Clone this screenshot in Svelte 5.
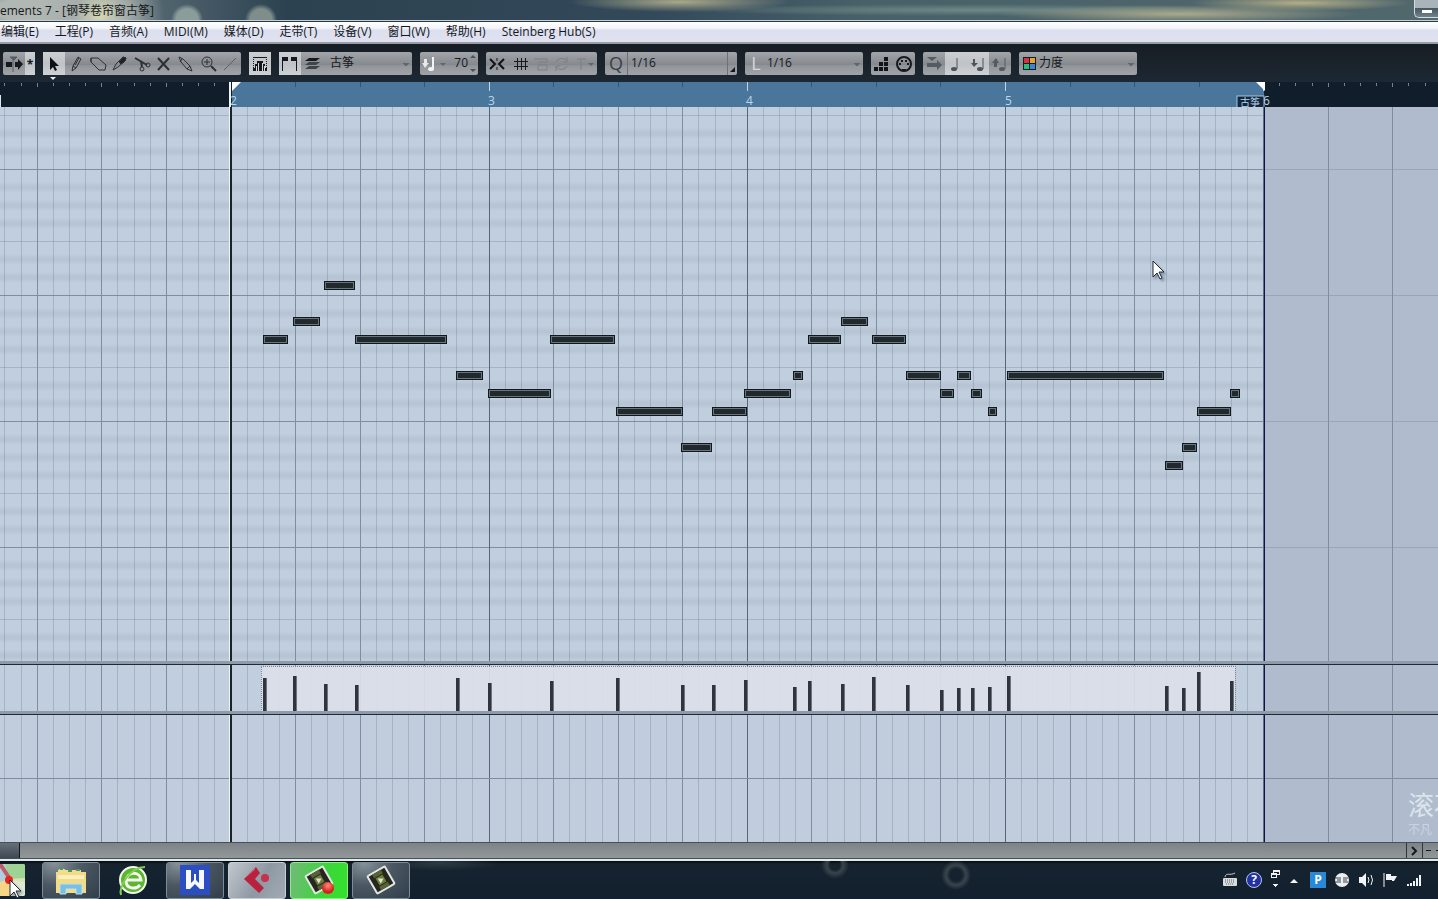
<script>
	const menus = ['编辑(E)', '工程(P)', '音频(A)', 'MIDI(M)', '媒体(D)', '走带(T)', '设备(V)', '窗口(W)', '帮助(H)', 'Steinberg Hub(S)'];

	// timeline: one beat in pixels, and where bar 2 starts
	const BEAT = 64.55;
	const ORIGIN = 230.4;
	const END = 1264;

	const lines = [];
	for (let i = -16; i <= 96; i++) {
		const x = Math.round(ORIGIN + (i * BEAT) / 4);
		const kind = i % 16 === 0 ? 'bar' : i % 4 === 0 ? 'beat' : 'fine';
		lines.push({ x, kind });
	}
	const shown = lines.filter(l => l.kind !== 'fine' || l.x < END);

	const octaves = [-64, 62, 188, 314, 440, 566];

	// start, end, row
	const notes = [
		[263, 288, 228], [293, 320, 210], [324, 355, 174], [355, 447, 228], [456, 483, 264],
		[488, 551, 282], [550, 615, 228], [616, 683, 300], [681, 712, 336], [712, 747, 300],
		[744, 791, 282], [793, 803, 264], [808, 841, 228], [841, 868, 210], [872, 906, 228],
		[906, 941, 264], [940, 954, 282], [957, 971, 264], [971, 982, 282], [988, 997, 300],
		[1007, 1164, 264], [1165, 1183, 354], [1182, 1197, 336], [1197, 1231, 300], [1230, 1240, 282]
	];

	// start, height
	const velocities = [
		[263, 33], [293, 35], [324, 27], [355, 26], [456, 33], [488, 28], [550, 30], [616, 33],
		[681, 26], [712, 26], [744, 31], [793, 24], [808, 30], [841, 27], [872, 34], [906, 26],
		[940, 21], [957, 23], [971, 23], [988, 24], [1007, 35], [1165, 25], [1182, 23], [1197, 39], [1230, 30]
	];

	let tool = $state('select');
	let velocity = $state('70');
	const tools = ['select', 'draw', 'erase', 'trim', 'split', 'mute', 'glue', 'zoom', 'line'];
</script>

{#snippet grid()}
	{#each shown as l}
		<rect class={l.kind} x={l.x} y="0" width="1" height="100%" />
	{/each}
{/snippet}

{#snippet locators()}
	<rect x={END - 1} y="0" width="1" height="100%" fill="#5c6f86" />
	<rect x={END} y="0" width="1" height="100%" fill="#0a1648" />
	<rect x="229" y="0" width="3" height="100%" fill="#eef4f4" />
	<rect x="230" y="0" width="2" height="100%" fill="#16242b" />
{/snippet}

{#snippet pointer()}
	<svg width="14" height="21" viewBox="0 0 14 21"><path d="M1 1v16l4-4 3 6 2-1-3-6h5z" fill="#fff" stroke="#1c2836" /></svg>
{/snippet}

{#snippet camera()}
	<svg width="34" height="32" viewBox="0 0 34 32">
		<g transform="rotate(-30 17 16)">
			<rect x="7" y="6" width="20" height="20" rx="1" fill="#25271f" stroke="#e4e6e2" stroke-width="2" />
			<path d="M12 7h10v4H12zM12 21h10v4H12z" fill="#566238" />
			<rect x="13" y="12" width="8" height="8" fill="#6c7c3c" />
			<path d="M15 13l5 3-5 3z" fill="#dfe3cf" />
		</g>
	</svg>
{/snippet}

<div class="window">
	<header class="title">
		<h1>ements 7 - [钢琴卷帘窗古筝]</h1>
		<button class="minimize" aria-label="最小化"><i></i></button>
	</header>

	<nav class="menu">
		{#each menus as item}
			<button>{item}</button>
		{/each}
	</nav>

	<div class="toolbar">
		<div class="group">
			<button aria-label="自动滚动"><svg width="22" height="23" viewBox="0 0 22 23"><path d="M3 10h6v5H3zM12 10h3V7l5 5-5 6v-3h-3z" fill="#15191d" /><path d="M10 6v14M7 5h7l-3 3z" stroke="#555c63" fill="#555c63" /></svg></button>
			<button class="star on" aria-label="暂停滚动">*</button>
		</div>

		<div class="group">
			{#each tools as t}
				<button class:on={tool === t} aria-label={t} onclick={() => (tool = t)}>
					<svg width="22" height="23" viewBox="0 0 22 23" fill="none" stroke="#2b3035">
						{#if t === 'select'}
							<path d="M7 5v13l3-3 2 4 2-1-2-4h4z" fill="#0c1014" stroke="none" />
						{:else if t === 'draw'}
							<path d="M8 14l5-9 3 2-5 9-4 3zM8 14l3 2M10 13l4-7" />
						{:else if t === 'erase'}
							<path d="M4 6h7l8 7-1 5h-6L4 10zM4 6v4" />
						{:else if t === 'trim'}
							<path d="M4 18l3-6 7-7 3 1-1 3-7 6z" /><path d="M10 10l4-5 3 1-1 3-4 3z" fill="#1c2024" />
						{:else if t === 'split'}
							<path d="M4 6l12 7M10 9l1 6" stroke-width="2" /><circle cx="11" cy="17" r="2" /><circle cx="17" cy="13" r="2" />
						{:else if t === 'mute'}
							<path d="M5 6l11 12M16 6L5 18" stroke-width="2" />
						{:else if t === 'glue'}
							<path d="M4 5l4 2 7 7 2 5-5-2-6-7zM7 7l-2 3M12 17l3-3" />
						{:else if t === 'zoom'}
							<circle cx="10" cy="10" r="5" /><path d="M7 10h6M10 7v6" /><path d="M14 14l5 5" stroke-width="2" />
						{:else}
							<path d="M5 18L17 6" stroke="#5b6168" />
						{/if}
					</svg>
				</button>
			{/each}
			<span class="marker"></span>
		</div>

		<div class="group">
			<button class="on" aria-label="独奏编辑器"><svg width="22" height="23" viewBox="0 0 22 23" shape-rendering="crispEdges"><path d="M4 5h14v1H4z" fill="#15191d" /><path d="M4 7v9M17 7v9" stroke="#15191d" stroke-dasharray="1 1" /><path d="M4 19v-3h2v-4h2V9h6v3h2v4h2v3z" fill="#15191d" /><path d="M7 14v5M9 11v8M13 11v8M15 14v5" stroke="#d5d7d9" /></svg></button>
		</div>

		<div class="group part">
			<button class="on" aria-label="显示部分边界"><svg width="22" height="23" viewBox="0 0 22 23" shape-rendering="crispEdges"><path d="M3 5h6v4H4v10H3zM12 5h6v14h-1V9h-5z" fill="#15191d" /></svg></button>
			<svg width="22" height="23" viewBox="0 0 22 23"><path d="M8 6h11l-4 3H4z" fill="#15191d" /><path d="M8 10h11l-4 3H4zM8 14h11l-4 3H4z" fill="#3e444a" /></svg>
			<select aria-label="部分"><option>古筝</option></select>
		</div>

		<div class="group vel">
			<svg width="30" height="23" viewBox="0 0 30 23"><path d="M4 7v4H2l3 5 4-5H7V7z" fill="#e6e8ea" /><ellipse cx="11" cy="17" rx="3" ry="2" fill="#f2f3f4" /><path d="M13 17V5" stroke="#f2f3f4" stroke-width="2" /><path d="M20 11h6l-3 3z" fill="#5f666d" /></svg>
			<input aria-label="插入力度" bind:value={velocity} />
			<svg width="10" height="23" viewBox="0 0 10 23"><path d="M2 6l3-3 3 3zM2 17l3 3 3-3z" fill="#4c5259" /></svg>
		</div>

		<div class="group">
			<button aria-label="吸附"><svg width="22" height="23" viewBox="0 0 22 23"><path d="M4 7l5 5-5 5M18 7l-5 5 5 5" fill="none" stroke="#101418" stroke-width="2" /><path d="M11 6v3M11 15v3" stroke="#101418" /></svg></button>
			<button aria-label="网格"><svg width="24" height="23" viewBox="0 0 24 23" shape-rendering="crispEdges"><path d="M9 6v12M13 6v12M17 6v12M6 9h14M6 14h14" stroke="#15191d" fill="none" /></svg></button>
			<button aria-label="网格类型" disabled><svg width="20" height="23" viewBox="0 0 20 23"><path d="M2 7h13v3H6M6 13h9v5H6z" fill="none" stroke="#7b8086" /></svg></button>
			<button aria-label="量化循环" disabled><svg width="20" height="23" viewBox="0 0 20 23"><path d="M4 10a6 5 0 0 1 11-1M15 14a6 5 0 0 1-11 1M15 5v5h-4M4 19v-5h4" fill="none" stroke="#7b8086" /></svg></button>
			<button aria-label="类型" disabled><svg width="25" height="23" viewBox="0 0 25 23"><path d="M5 7h9M9 7v11" stroke="#7b8086" /><path d="M16 11h6l-3 3z" fill="#5f666d" /></svg></button>
		</div>

		<div class="group quant">
			<span class="letter dark">Q</span>
			<select class="plain" aria-label="量化预置"><option>1/16</option></select>
			<button aria-label="量化面板"><svg width="9" height="23" viewBox="0 0 9 23"><path d="M7 15v5H2z" fill="#15191d" /></svg></button>
		</div>

		<div class="group length">
			<span class="letter">L</span>
			<select aria-label="长度量化"><option>1/16</option></select>
		</div>

		<div class="group">
			<button aria-label="步进输入"><svg width="22" height="23" viewBox="0 0 22 23"><path d="M3 15h4v4H3zM8 15h4v4H8zM13 15h4v4h-4zM8 10h4v4H8zM13 10h4v4h-4zM13 5h4v4h-4z" fill="#101418" /></svg></button>
			<button aria-label="MIDI输入"><svg width="22" height="23" viewBox="0 0 22 23"><circle cx="11" cy="12" r="7" fill="none" stroke="#15191d" stroke-width="2" /><path d="M6 11h2v2H6zM8 8h2v2H8zM12 8h2v2h-2zM14 11h2v2h-2zM9 17h4v2H9z" fill="#15191d" /></svg></button>
		</div>

		<div class="group">
			<button aria-label="移动插入模式"><svg width="22" height="23" viewBox="0 0 22 23"><path d="M4 5h10l-5 4zM4 11h10V8l5 5-5 5v-3H4z" fill="#555b62" /></svg></button>
			<button class="on" aria-label="记录音高"><svg width="22" height="23" viewBox="0 0 22 23"><ellipse cx="9" cy="17" rx="3" ry="2" fill="#4d545b" /><path d="M12 17V6" stroke="#4d545b" /></svg></button>
			<button class="on" aria-label="记录打开力度"><svg width="22" height="23" viewBox="0 0 22 23"><path d="M6 7v4H4l3 4 4-4H8V7z" fill="#4d545b" /><ellipse cx="13" cy="17" rx="3" ry="2" fill="#4d545b" /><path d="M16 17V6" stroke="#4d545b" /></svg></button>
			<button aria-label="记录关闭力度"><svg width="22" height="23" viewBox="0 0 22 23"><path d="M5 15v-4H3l4-5 3 5H8v4z" fill="#555b62" /><ellipse cx="13" cy="17" rx="3" ry="2" fill="#555b62" /><path d="M16 17V6" stroke="#555b62" /></svg></button>
		</div>

		<div class="group color">
			<svg width="20" height="23" viewBox="0 0 20 23"><path d="M4 5h13v13H4z" fill="#181c20" /><path d="M5 6h5v5H5z" fill="#d8323c" /><path d="M11 6h5v5h-5z" fill="#e0a634" /><path d="M5 12h5v5H5z" fill="#22c07c" /><path d="M11 12h5v5h-5z" fill="#3f83d6" /></svg>
			<select aria-label="颜色"><option>力度</option></select>
		</div>
	</div>

	<svg class="ruler" height="25" aria-label="标尺">
		<rect width="100%" height="25" fill="#101e2c" />
		<rect x="232" width={END - 232} height="25" fill="#4a769b" />
		{#each lines as l}
			{#if l.x < 229 || l.x > END}
				<rect x={l.x} y="1" width="1" height={l.kind === 'fine' ? 3 : 4} fill="#708494" />
			{:else if l.kind === 'bar' && l.x > 240}
				<rect x={l.x} y="0" width="1" height="9" fill="#c3d4e2" />
			{:else if l.kind === 'beat'}
				<rect x={l.x} y="0" width="1" height="5" fill="#2f5676" />
			{/if}
		{/each}
		<rect x="0" y="13" width="1" height="12" fill="#dce6ec" />
		{#each [2, 3, 4, 5, 6] as n}
			<text x={230 + Math.round((n - 2) * 258.2)} y="23">{n}</text>
		{/each}
		<path d="M232 0h9l-9 9zM1265 0h-9l9 9z" fill="#fff" />
		<rect x="1237" y="14" width="27" height="14" fill="#12283e" stroke="#a9c4da" />
		<text class="tag" x="1240" y="24">古筝</text>
		<rect x="229" width="2" height="25" fill="#eef4f4" />
	</svg>

	<main class="roll">
		<svg width="100%" height="100%" shape-rendering="crispEdges">
			<defs>
				<linearGradient id="band" x2="0" y2="1">
					<stop offset="0" stop-color="#aebccc" stop-opacity="0" />
					<stop offset="0.4" stop-color="#aebccc" stop-opacity="0.55" />
					<stop offset="0.6" stop-color="#aebccc" stop-opacity="0.55" />
					<stop offset="1" stop-color="#aebccc" stop-opacity="0" />
				</linearGradient>
			</defs>
			<rect width="100%" height="100%" fill="#c1cede" />
			{#each octaves as y}
				{#each [18, 36, 54, 90, 108] as d}
					<rect x="0" y={y + d - 5} width={END} height="11" fill="url(#band)" />
				{/each}
				<rect class="fine" x="0" y={y + 72} width={END} height="1" />
			{/each}
			<rect x={END} width="100%" height="100%" fill="#b0bccd" />
			{#each octaves as y}
				<rect class="beat" x="0" y={y} width={END} height="1" />
				<rect class="fine" x={END} y={y} width="100%" height="1" />
			{/each}
			{@render grid()}
			{#each notes as [from, to, y]}
				<rect x={from} y={y} width={to - from} height="9" fill="#10181e" />
				<rect x={from + 1} y={y + 1} width={to - from - 2} height="7" fill="#66757e" />
				<rect x={from + 2} y={y + 2} width={to - from - 4} height="5" fill="#22292c" />
			{/each}
			{@render locators()}
		</svg>
		<span class="pointer">{@render pointer()}</span>
	</main>

	<div class="splitter"></div>

	<svg class="lane" height="46" shape-rendering="crispEdges">
		<rect width="100%" height="100%" fill="#c1cede" />
		<rect x={END} width="100%" height="100%" fill="#b0bccd" />
		{@render grid()}
		<rect x="261" y="1" width="974" height="45" fill="#dbdfe8" fill-opacity="0.93" stroke="#7c8794" stroke-dasharray="1 1" />
		{#each velocities as [x, h]}
			<rect x={x} y={46 - h} width="4" height={h} fill="#30353d" />
			<rect x={x + 3} y={46 - h} width="1" height={h} fill="#6d747e" />
		{/each}
		{@render locators()}
	</svg>

	<div class="splitter"></div>

	<div class="lower">
		<svg width="100%" height="127" shape-rendering="crispEdges">
			<rect width="100%" height="100%" fill="#c1cddc" />
			<rect x={END} width="100%" height="100%" fill="#b0bccd" />
			{@render grid()}
			<rect class="beat" y="63" width="100%" height="1" />
			{@render locators()}
		</svg>
		<div class="watermark"><strong>滚石</strong><span>不凡</span></div>
	</div>

	<div class="scroll">
		<span class="thumb"></span>
		<button aria-label="向右滚动"><svg width="15" height="14" viewBox="0 0 15 14"><path d="M5 3l4 4-4 4" fill="none" stroke="#15191d" stroke-width="2" /></svg></button>
		<button aria-label="缩小"><svg width="15" height="14" viewBox="0 0 15 14"><path d="M3 6h5v1H3zM13 6h2v1h-2z" fill="#15191d" /></svg></button>
	</div>

	<footer class="taskbar">
		<button class="app bare first" aria-label="画图">
			<svg width="30" height="32" viewBox="0 0 30 32"><rect width="30" height="32" rx="2" fill="#d9e4ad" /><path d="M0 0h10l4 15L0 20z" fill="#aecfe2" /><path d="M10 0h18a2 2 0 0 1 2 2v12L14 15z" fill="#9fd395" /><path d="M14 16l16 2v12a2 2 0 0 1-2 2H15z" fill="#dfe9d2" /><path d="M0 19l14-3 2 16H0z" fill="#f5d684" /><path d="M5 0l10 15" stroke="#bd5d69" stroke-width="4" /><circle cx="14" cy="16" r="4" fill="#e82320" /></svg>
		</button>
		<button class="app" aria-label="资源管理器">
			<svg width="34" height="32" viewBox="0 0 34 32"><path d="M4 6l4-2 4 2h15v4H4z" fill="#f1dd92" /><path d="M2 8h12l2-2h6l1 2h9v21H2z" fill="#f3dc85" /><path d="M4 11h26v4H4z" fill="#fbefbd" /><path d="M6 5h3M14 7h4M22 6h4" stroke="#4b9a64" stroke-width="2" /><path d="M6 30V20h22v10h-6v-5H12v5z" fill="#79bfe2" stroke="#b9e2f3" /></svg>
		</button>
		<button class="app bare" aria-label="360浏览器">
			<svg width="34" height="34" viewBox="0 0 34 34"><circle cx="17" cy="17" r="13" fill="#5cb631" stroke="#f3f9ef" stroke-width="2" /><path d="M10 17h15c-1-9-14-9-15 1 0 8 10 9 14 4" fill="none" stroke="#f3f9ef" stroke-width="3" /><path d="M5 32C2 24 14 4 29 4" fill="none" stroke="#7fd04f" stroke-width="2" /></svg>
		</button>
		<button class="app" aria-label="WPS">
			<svg width="30" height="30" viewBox="0 0 30 30"><rect width="30" height="30" fill="#2b4ec2" /><path d="M6 5h5v13l3-3h2l3 3V5h5v19h-4l-5-5-5 5H6z" fill="#f6f8fc" /><path d="M14 9h2v7h-2z" fill="#f6f8fc" /></svg>
		</button>
		<button class="app active" aria-label="Cubase">
			<svg width="32" height="32" viewBox="0 0 32 32"><path d="M15 3L3 15l15 14 5-5-9-9 5-6z" fill="#b8223f" /><circle cx="24" cy="14" r="4" fill="#c8304b" /><path d="M5 13l9-8" stroke="#d9657a" /></svg>
		</button>
		<button class="app recording" aria-label="录像机">
			{@render camera()}
			<i class="rec"></i>
		</button>
		<button class="app" aria-label="Camtasia">{@render camera()}</button>

		<div class="tray">
			<svg width="16" height="20" viewBox="0 0 16 20"><path d="M3 7c1-5 5-1 10-4" fill="none" stroke="#c9ced2" /><rect x="1" y="8" width="14" height="8" rx="1" fill="#dadcdd" /><path d="M3 10h10M3 12h10M4 14h8" stroke="#5d656c" stroke-dasharray="1 1" /></svg>
			<span class="help">?</span>
			<svg width="10" height="24" viewBox="0 0 10 24" shape-rendering="crispEdges"><path d="M3 2h7v5H3z" fill="#eef2f5" /><path d="M4 4h5v2H4z" fill="#14202e" /><path d="M1 5h6v5H1z" fill="#eef2f5" /><path d="M2 7h4v2H2z" fill="#14202e" /><path d="M2 16h6l-3 3z" fill="#eef2f5" /></svg>
			<svg width="14" height="20" viewBox="0 0 14 20"><path d="M2 13h8L6 9z" fill="#f2f5f7" /></svg>
			<span class="pp">P</span>
			<svg width="16" height="16" viewBox="0 0 16 16"><circle cx="8" cy="8" r="7" fill="#eceff1" /><path d="M1 6h6M1 10h6M3 8h4M9 6h5M9 8h4M9 10h5" stroke="#38434d" fill="none" /></svg>
			<svg width="16" height="16" viewBox="0 0 16 16"><path d="M1 5h3l4-4v14l-4-4H1z" fill="#f2f5f7" /><path d="M10 5q2 3 0 6M13 3q3 5 0 10" fill="none" stroke="#f2f5f7" /></svg>
			<svg width="16" height="16" viewBox="0 0 16 16"><path d="M2 1v14" stroke="#f2f5f7" /><path d="M4 2h5v2h6l-3 5h-2V8H4z" fill="#f2f5f7" /></svg>
			<svg width="16" height="16" viewBox="0 0 16 16"><path d="M1 12h2v2H1zM4 11h2v3H4zM7 9h2v5H7zM10 6h2v8h-2zM13 3h2v11h-2z" fill="#f2f5f7" /></svg>
		</div>
		<span class="pointer low">{@render pointer()}</span>
	</footer>
</div>

<style>
	:global(body) {
		margin: 0;
		background: #101e2c;
	}

	.window {
		display: flex;
		flex-direction: column;
		min-height: 100vh;
		overflow: hidden;
		font: 12px/20px 'Open Sans', 'Noto Sans CJK SC', sans-serif;
		color: #15191d;
	}

	svg {
		display: block;
		flex-shrink: 0;
	}

	button, select, input {
		margin: 0;
		padding: 0;
		border: 0;
		background: none;
		font: inherit;
		color: inherit;
	}

	.title {
		display: flex;
		justify-content: space-between;
		height: 20px;
		border-bottom: 1px solid #c4d0d6;
		background:
			radial-gradient(circle at 100px 16px, #d5d7b4 0, #a6adaa 26px, transparent 64px),
			radial-gradient(ellipse 90px 22px at 50px 10px, #b1b8b4 60%, transparent),
			radial-gradient(circle at 187px 20px, #8b9d9b 11px, transparent 16px),
			radial-gradient(circle at 261px 20px, #7f8d8b 11px, transparent 16px),
			radial-gradient(ellipse 110px 10px at 680px 2px, #aaa98a, transparent),
			radial-gradient(ellipse 180px 9px at 1180px 14px, #a9aa8d, transparent),
			radial-gradient(ellipse 110px 8px at 1300px 3px, #b3ae88, transparent),
			radial-gradient(ellipse 300px 6px at 980px 10px, #6f8987, transparent),
			linear-gradient(90deg, #7f9196, #2c4250 20%, #33495a 45%, #486068 60%, #51686d);
	}

	h1 {
		margin: 0;
		font-size: 12px;
		line-height: 22px;
		font-weight: 400;
		white-space: nowrap;
	}

	.minimize {
		width: 24px;
		height: 18px;
		box-sizing: border-box;
		border: 1px solid #d3dce0;
		border-top: 0;
		border-right: 0;
		border-radius: 0 0 0 5px;
		background: linear-gradient(#a8b4b9 45%, #4a5961 50%, #71828a);
	}

	.minimize i {
		display: block;
		width: 10px;
		height: 3px;
		margin: 5px auto 0;
		background: #fff;
	}

	.menu {
		display: flex;
		gap: 16px;
		height: 20px;
		padding-left: 1px;
		border-top: 1px solid #2a3844;
		border-bottom: 2px solid #9a9da8;
		background: linear-gradient(#fff, #f3f5fb 30%, #dcdfee 42%, #e0e2f0);
		white-space: nowrap;
	}

	.toolbar {
		display: flex;
		align-items: center;
		gap: 8px;
		height: 38px;
		padding-left: 3px;
		background: linear-gradient(#171d24, #1d2833);
	}

	.group {
		position: relative;
		display: flex;
		align-items: center;
		flex-shrink: 0;
		height: 23px;
		border-radius: 2px;
		background: linear-gradient(#a2a5aa, #85888d 55%, #92959a 60%, #a0a3a8);
	}

	.on {
		background: linear-gradient(#cdd0d3, #bfc2c6 50%, #cfd2d5);
	}

	.star {
		width: 10px;
		height: 23px;
		line-height: 26px;
		font-weight: 700;
	}

	.marker {
		position: absolute;
		left: 7px;
		top: 25px;
		border: 3px solid transparent;
		border-top-color: #e9edf0;
	}

	/* the drop-down arrow is three stacked strips */
	select {
		flex: 1;
		min-width: 0;
		height: 23px;
		appearance: none;
		background:
			linear-gradient(#5f666d, #5f666d) no-repeat right 3px top 11px / 6px 1px,
			linear-gradient(#5f666d, #5f666d) no-repeat right 4px top 12px / 4px 1px,
			linear-gradient(#5f666d, #5f666d) no-repeat right 5px top 13px / 2px 1px;
	}

	select.plain {
		padding-left: 3px;
		border: 1px solid #6c7177;
		border-width: 0 1px;
		background: none;
	}

	.part {
		width: 133px;
	}

	.part select {
		padding-left: 7px;
	}

	.vel {
		width: 58px;
	}

	.vel input {
		width: 18px;
		text-align: right;
	}

	.quant {
		width: 132px;
	}

	.length, .color {
		width: 118px;
	}

	.letter {
		width: 22px;
		font-size: 18px;
		line-height: 23px;
		text-align: center;
		color: #d5d8da;
	}

	.letter.dark {
		color: #3a4047;
	}

	.ruler, .lane {
		width: 100%;
	}

	.ruler {
		overflow: visible;
	}

	text {
		font-size: 12px;
		fill: #b9d6ec;
	}

	text.tag {
		font-size: 10px;
	}

	.fine {
		fill: #5a7088;
		fill-opacity: 0.28;
	}

	.beat {
		fill: #7e8ea2;
	}

	.bar {
		fill: #56677b;
	}

	.roll {
		position: relative;
		display: flex;
		flex: 1;
		min-height: 300px;
	}

	.roll > svg {
		position: absolute;
	}

	.pointer {
		position: absolute;
		left: 1152px;
		top: 153px;
		filter: drop-shadow(2px 2px 1px rgba(40, 60, 80, 0.4));
	}

	.pointer.low {
		left: 9px;
		top: 18px;
	}

	.splitter {
		height: 3px;
		border-bottom: 1px solid #1c2a3c;
		background: #909ba9;
	}

	.lower {
		position: relative;
	}

	.watermark {
		position: absolute;
		left: calc(100% - 30px);
		bottom: 4px;
		display: flex;
		flex-direction: column;
		color: #dce4ec;
		white-space: nowrap;
	}

	.watermark strong {
		font: 400 26px/30px 'Liberation Serif', 'Noto Sans CJK SC', serif;
	}

	.watermark span {
		font-size: 12px;
		line-height: 16px;
		opacity: 0.6;
	}

	.scroll {
		display: flex;
		height: 15px;
		border: 1px solid #46505a;
		border-width: 1px 0;
		background: linear-gradient(#7d8386, #92989a);
	}

	.thumb {
		width: 19px;
		margin-right: auto;
		border-right: 1px solid #10161d;
		background: linear-gradient(#667078, #3f4852);
	}

	.scroll button {
		width: 16px;
		border-left: 1px solid #2c353e;
	}

	.taskbar {
		position: relative;
		display: flex;
		align-items: center;
		gap: 4px;
		height: 38px;
		padding-right: 16px;
		border-top: 2px solid #e3e8ea;
		background:
			radial-gradient(circle at 835px 4px, transparent 5px, #39454d 8px, transparent 14px),
			radial-gradient(circle at 956px 14px, transparent 6px, #39454d 10px, transparent 15px),
			radial-gradient(ellipse 60px 8px at 440px 2px, #2c3c46, transparent),
			linear-gradient(#05090e, #16232f 8%, #12202f);
	}

	.app {
		position: relative;
		display: flex;
		align-items: center;
		justify-content: center;
		width: 58px;
		height: 37px;
		box-sizing: border-box;
		border: 1px solid #7d8b96;
		border-radius: 3px;
		background: radial-gradient(ellipse at 20% 0, #87929a, #4b5863 45%, #303e4b);
	}

	.app.bare {
		border-color: transparent;
		background: none;
	}

	.app.first {
		width: 38px;
		justify-content: flex-start;
	}

	.app.first svg {
		margin-left: -6px;
	}

	.app.active {
		border-color: #c6cdd3;
		background: linear-gradient(120deg, #c2c8ce, #8e98a3 55%, #a2abb5);
	}

	.app.recording {
		border-color: #8fe88a;
		background: linear-gradient(100deg, #73b97a, #3bd63a 60%, #33e32b);
	}

	.rec {
		position: absolute;
		right: 13px;
		bottom: 4px;
		width: 12px;
		height: 12px;
		border-radius: 50%;
		background: radial-gradient(circle at 50% 30%, #ff8f80, #d81f1c 60%);
	}

	.tray {
		display: flex;
		align-items: center;
		gap: 8px;
		margin-left: auto;
	}

	.help, .pp {
		width: 16px;
		height: 16px;
		line-height: 16px;
		text-align: center;
		font-weight: 700;
		color: #fff;
		background: #2789d8;
	}

	.help {
		width: 14px;
		height: 14px;
		line-height: 14px;
		border: 1px solid #b9c4ee;
		border-radius: 50%;
		background: #2232a4;
	}
</style>
